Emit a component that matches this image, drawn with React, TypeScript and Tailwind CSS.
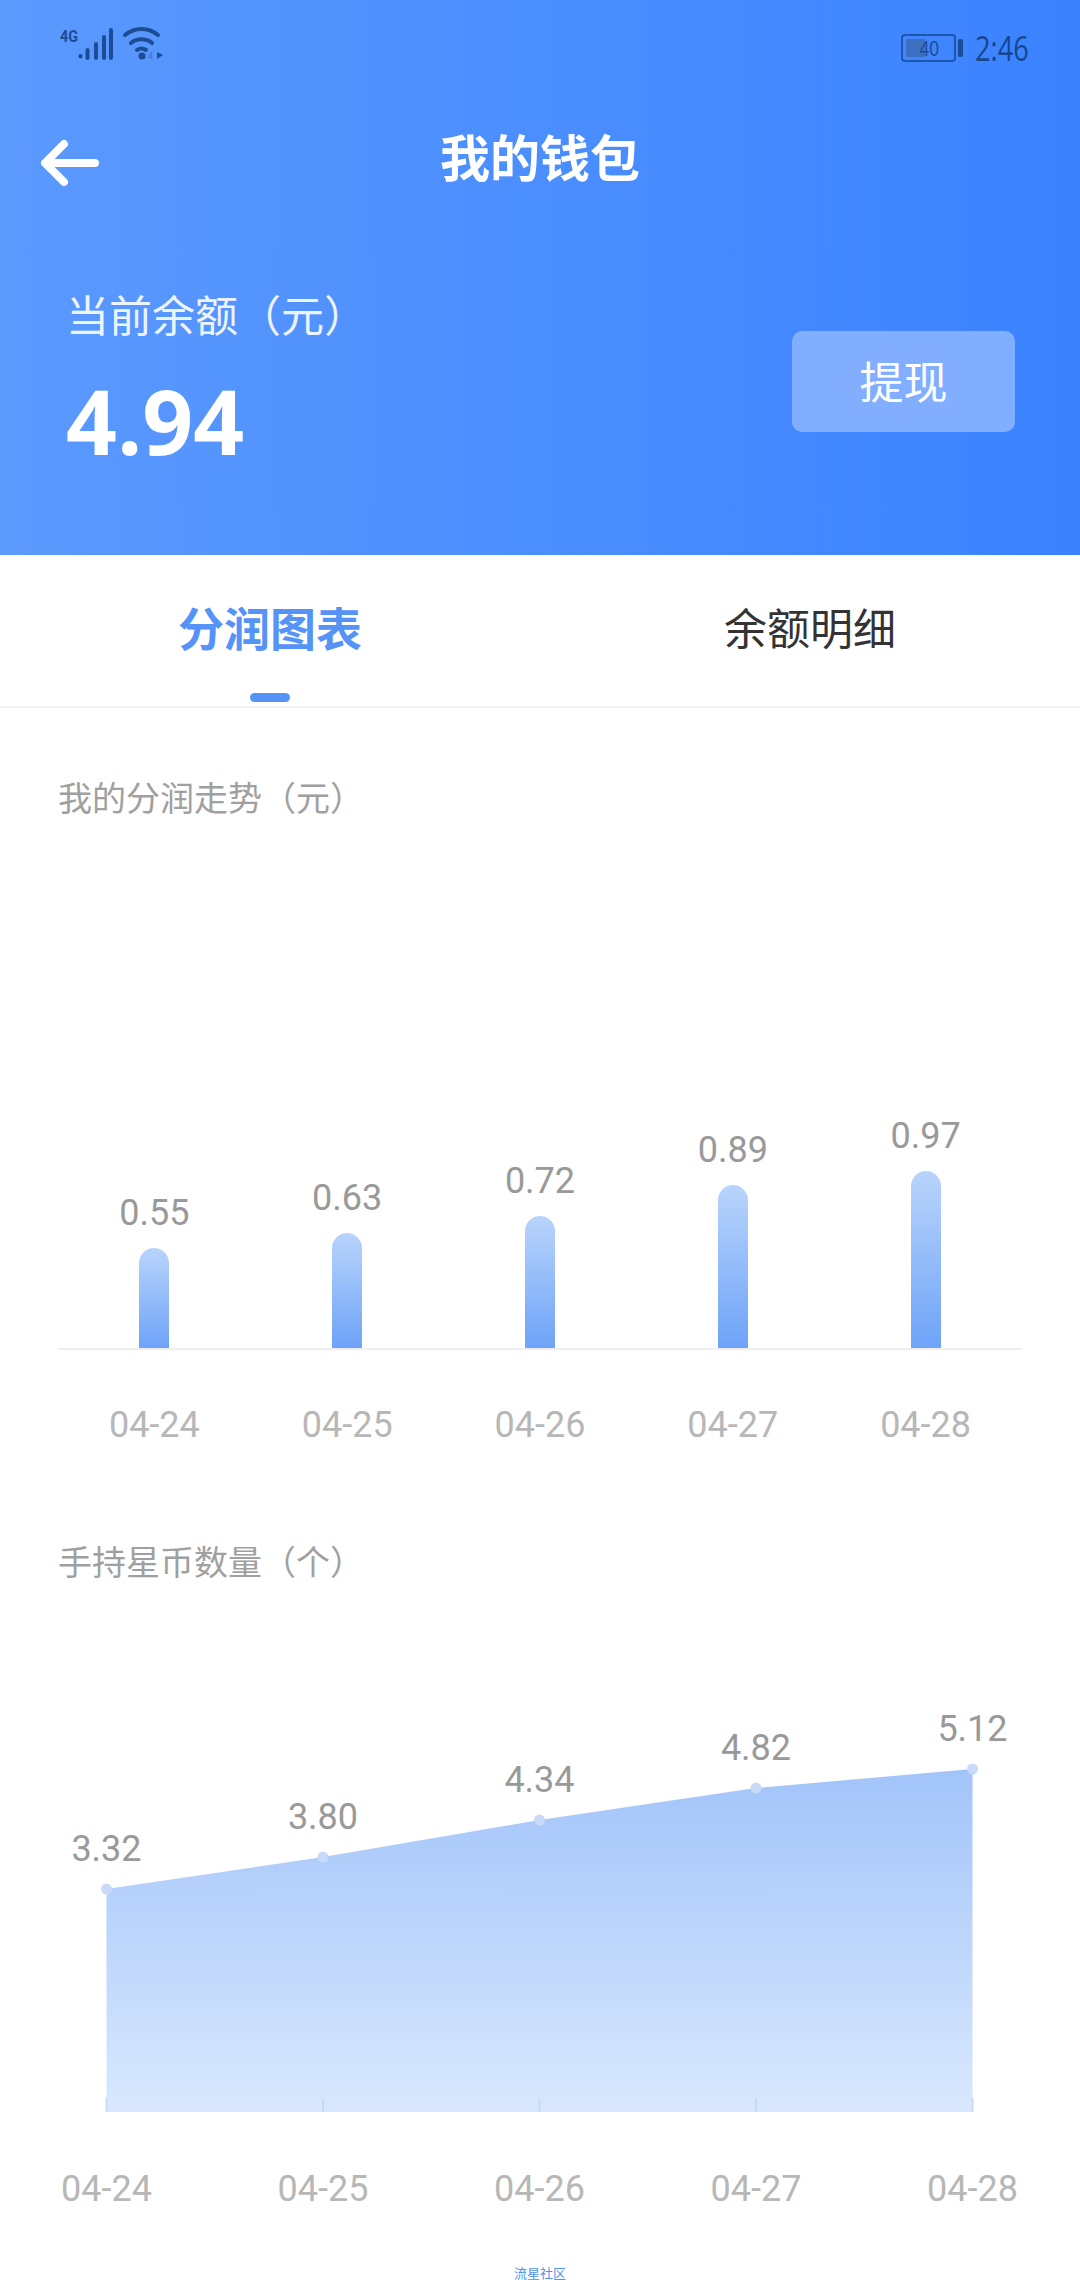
import React from "react";

const font = { fontFamily: '"Noto Sans CJK SC", sans-serif' };

const bars = [
  { v: "0.55", d: "04-24", h: 100 },
  { v: "0.63", d: "04-25", h: 115 },
  { v: "0.72", d: "04-26", h: 132 },
  { v: "0.89", d: "04-27", h: 163 },
  { v: "0.97", d: "04-28", h: 177 },
];

const pts = [
  { x: 106.5, y: 1889, v: "3.32", d: "04-24" },
  { x: 323, y: 1857, v: "3.80", d: "04-25" },
  { x: 539.5, y: 1820, v: "4.34", d: "04-26" },
  { x: 756, y: 1788, v: "4.82", d: "04-27" },
  { x: 972.5, y: 1769, v: "5.12", d: "04-28" },
];
const T = 1700; // top of the svg in page coordinates

function StatusLeft() {
  return (
    <svg width="110" height="46" viewBox="0 0 110 46" className="block">
      <text x="0" y="16" fontFamily="Roboto, sans-serif" fontWeight="700" fontSize="17" fill="#1c4c94" textLength="18" lengthAdjust="spacingAndGlyphs">4G</text>
      <g stroke="#1c4c94" strokeWidth="4" strokeLinecap="round">
        <line x1="20.5" y1="30" x2="20.5" y2="30.5" />
        <line x1="27.5" y1="24" x2="27.5" y2="32" />
        <line x1="36" y1="18" x2="36" y2="32" />
        <line x1="44" y1="11" x2="44" y2="32" />
        <line x1="51" y1="4" x2="51" y2="32" />
      </g>
      <g fill="none" stroke="#1c4c94" strokeWidth="4" strokeLinecap="round">
        <path d="M65 9 C75 1 88 1 98 9" />
        <path d="M71 17 C77 12 86 12 92 17" />
        <path d="M77 24 C80 22 83 22 86 24" />
      </g>
      <circle cx="82" cy="30" r="3.5" fill="#1c4c94" />
      <text x="88" y="33" fontFamily="Roboto, sans-serif" fontSize="9" fill="#3f73c4">4</text>
      <path d="M97 26 L97 33 L103 29 Z" fill="#1c4c94" />
    </svg>
  );
}

export default function App() {
  return (
    <div className="w-[1080px] h-[2280px] bg-white overflow-hidden flex flex-col" style={font}>
      {/* Header */}
      <div className="h-[555px] shrink-0 bg-linear-to-r from-[#5b99fd] to-[#3a82ff] flex flex-col text-white">
        <div className="h-[70px] pt-[26px] pl-[60px] pr-[53px] flex justify-between items-start">
          <StatusLeft />
          <div className="flex items-center gap-[2px] mt-[6px]">
            <div className="relative w-[55px] h-[28px] border-2 border-[#1d57ad] rounded-[4px] p-[3px]">
              <div className="w-[19px] h-full bg-[#3c6fc0]" />
              <span className="absolute left-[14px] top-[-1px] text-[22px] leading-[28px] text-[#1c4c94] font-['Liberation_Sans',sans-serif] scale-x-80">40</span>
            </div>
            <div className="w-[5px] h-[18px] bg-[#1c4c94] rounded-[2px]" />
            <span className="ml-[10px] text-[34px] leading-[32px] text-[#17468f] origin-left scale-x-80 w-[52px] font-['Open_Sans',sans-serif]">2:46</span>
          </div>
        </div>
        <div className="h-[92px] mt-[39px] relative flex items-center justify-center">
          <svg width="62" height="48" viewBox="0 0 62 48" className="absolute left-[41px] top-[30px]">
            <path d="M54 24 H5 M23 5 L4 24 L23 43" fill="none" stroke="white" strokeWidth="8" strokeLinecap="round" strokeLinejoin="round" />
          </svg>
          <span className="text-[50px] font-bold leading-none">我的钱包</span>
        </div>
        <div className="flex justify-between pl-[66px] pr-[65px] mt-[82px]">
          <div className="flex flex-col">
            <span className="text-[43px] leading-[60px] text-[#eef4ff]">当前余额（元）</span>
            <span className="text-[89px] leading-[100px] font-bold font-['Open_Sans',sans-serif] mt-[28px]">4.94</span>
          </div>
          <div className="w-[223px] h-[101px] mt-[48px] pb-[4px] rounded-[10px] bg-[#82aeff] flex items-center justify-center text-[44px]">提现</div>
        </div>
      </div>

      {/* Tabs */}
      <div className="h-[153px] shrink-0 border-b-2 border-[#f3f3f3] grid grid-cols-2">
        <div className="relative flex justify-center pt-[41px]">
          <span className="text-[46px] leading-[60px] font-bold text-[#5693f7]">分润图表</span>
          <div className="absolute left-[250px] top-[138px] w-[40px] h-[9px] rounded-full bg-[#5693f7]" />
        </div>
        <div className="flex justify-center pt-[41px]">
          <span className="text-[43px] leading-[60px] text-[#333333]">余额明细</span>
        </div>
      </div>

      {/* Bar chart */}
      <div className="px-[58px] pt-[66px]">
        <div className="text-[34px] leading-[46px] text-[#a0a0a0]">我的分润走势（元）</div>
        <div className="mt-[250px] h-[280px] border-b-2 border-[#eeeeee] grid grid-cols-5 items-end">
          {bars.map((b) => (
            <div key={b.d} className="flex flex-col items-center">
              <span className="text-[36px] leading-[40px] mb-[15px] text-[#999999] font-['Roboto',sans-serif]">{b.v}</span>
              <div
                className="w-[30px] rounded-t-full bg-linear-to-b from-[#b9d4fb] to-[#6ea3f8]"
                style={{ height: b.h }}
              />
            </div>
          ))}
        </div>
        <div className="grid grid-cols-5 mt-[53px]">
          {bars.map((b) => (
            <span key={b.d} className="text-center text-[36px] leading-[44px] text-[#b7b7b7] font-['Roboto',sans-serif]">{b.d}</span>
          ))}
        </div>
        <div className="mt-[91px] text-[34px] leading-[46px] text-[#a0a0a0]">手持星币数量（个）</div>
      </div>

      {/* Area chart */}
      <svg width="1080" height="566" viewBox={`0 ${T} 1080 566`} className="block mt-[116px] shrink-0">
        <defs>
          <linearGradient id="area" x1="0" y1="0" x2="0" y2="1">
            <stop offset="0" stopColor="#a2c4f9" />
            <stop offset="1" stopColor="#d9e8fe" />
          </linearGradient>
        </defs>
        <polygon
          points={`${pts.map((p) => `${p.x},${p.y}`).join(" ")} 972.5,2112 106.5,2112`}
          fill="url(#area)"
        />
        {pts.map((p) => (
          <g key={p.d}>
            <line x1={p.x} x2={p.x} y1="2098" y2="2112" stroke="#c5dcf3" strokeWidth="2" />
            <circle cx={p.x} cy={p.y} r="5.5" fill="#c7dbf9" />
            <text x={p.x} y={p.y - 28} textAnchor="middle" fontSize="36" fill="#999999" fontFamily="Roboto, sans-serif">{p.v}</text>
            <text x={p.x} y="2201" textAnchor="middle" fontSize="36" fill="#b7b7b7" fontFamily="Roboto, sans-serif">{p.d}</text>
          </g>
        ))}
      </svg>
      <div className="text-center text-[13px] leading-[14px] text-[#4f94ea]">流星社区</div>
    </div>
  );
}
